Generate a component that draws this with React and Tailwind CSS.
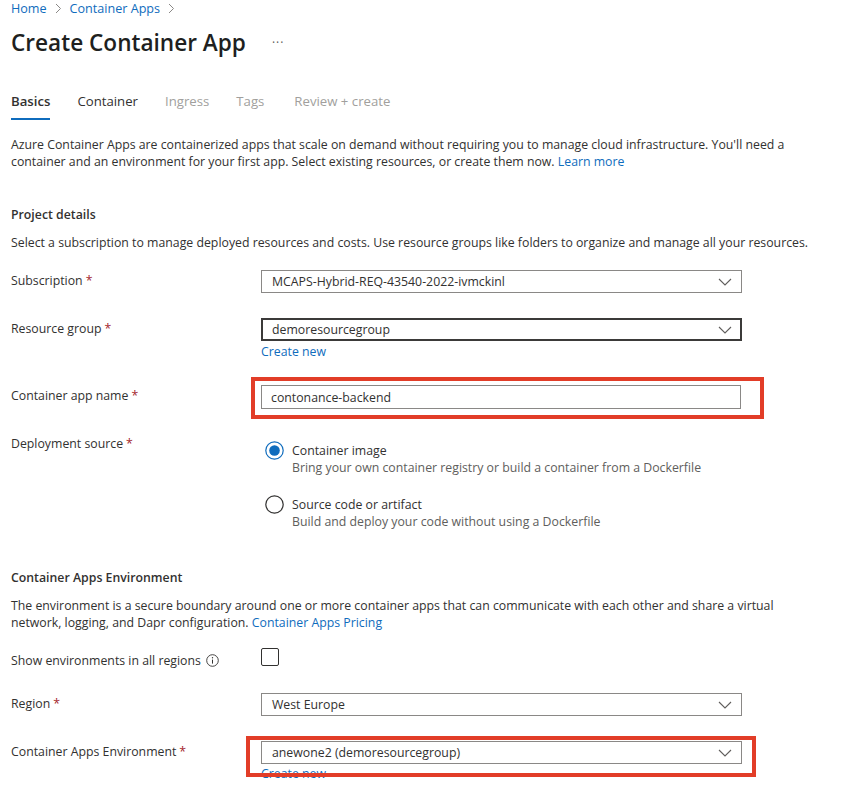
import React from "react";

const font = { fontFamily: '"Open Sans", "Noto Sans", sans-serif' };

function Chevron() {
  return (
    <svg width="14" height="8" viewBox="0 0 14 8" className="shrink-0">
      <path d="M1 1 L7 7 L13 1" fill="none" stroke="#605e5c" strokeWidth="1.1" />
    </svg>
  );
}

function Crumb() {
  return (
    <svg width="7" height="11" viewBox="0 0 7 11" className="shrink-0 mx-[8px]">
      <path d="M1 1 L5.5 5.5 L1 10" fill="none" stroke="#8a8886" strokeWidth="1" />
    </svg>
  );
}

function Req() {
  return <span className="text-[#a4262c] ml-[3px]">*</span>;
}

function Label({ children, req = true }) {
  return (
    <div className="w-[250px] shrink-0 mt-[2px] leading-[17px]">
      {children}
      {req && <Req />}
    </div>
  );
}

function Select({ value, focused }) {
  return (
    <div
      className={
        "w-[481px] h-[23px] flex items-center justify-between bg-white " +
        (focused ? "border-2 border-[#3b3a39] pl-[9px] pr-[8px]" : "border border-[#8a8886] pl-[10px] pr-[9px]")
      }
    >
      <span className="leading-[17px]">{value}</span>
      <Chevron />
    </div>
  );
}

function Radio({ checked }) {
  return (
    <svg width="19" height="19" viewBox="0 0 19 19" className="shrink-0">
      <circle cx="9.5" cy="9.5" r="8.7" fill="white" stroke={checked ? "#0f6cbd" : "#323130"} strokeWidth="1.2" />
      {checked && <circle cx="9.5" cy="9.5" r="5.3" fill="#0f6cbd" />}
    </svg>
  );
}

export default function App() {
  return (
    <div className="w-[849px] h-[802px] overflow-hidden bg-white text-[#323130] text-[12.3px]" style={font}>
      <div className="px-[11px] flex flex-col">
        {/* breadcrumb */}
        <div className="flex items-center h-[17px] leading-[17px] text-[#0f6cbd] text-[12.6px]">
          <span>Home</span>
          <Crumb />
          <span>Container Apps</span>
          <Crumb />
        </div>
        {/* title */}
        <div className="mt-[10px] flex items-center h-[32px]">
          <h1 className="text-[22.6px] leading-[32px] font-semibold text-[#201f1e]">Create Container App</h1>
          <span className="ml-[26px] text-[#605e5c] text-[12px] tracking-[1px]">···</span>
        </div>
        {/* tabs */}
        <div className="mt-[34px] flex gap-[27px] leading-[17px] text-[13.2px]">
          <div className="pb-[8px] border-b-2 border-[#0f6cbd] font-semibold text-[#323130]">Basics</div>
          <div className="pb-[8px] text-[#323130]">Container</div>
          <div className="pb-[8px] text-[#a19f9d]">Ingress</div>
          <div className="pb-[8px] text-[#a19f9d]">Tags</div>
          <div className="pb-[8px] text-[#a19f9d] ml-[3px]">Review + create</div>
        </div>
        {/* description */}
        <p className="mt-[16px] leading-[17px] whitespace-nowrap">
          Azure Container Apps are containerized apps that scale on demand without requiring you to manage cloud infrastructure. You'll need a
          <br />
          container and an environment for your first app. Select existing resources, or create them now.{" "}
          <span className="text-[#0f6cbd]">Learn more</span>
        </p>

        {/* Project details */}
        <h2 className="mt-[36px] font-semibold leading-[17px]">Project details</h2>
        <p className="mt-[11px] leading-[17px] whitespace-nowrap">
          Select a subscription to manage deployed resources and costs. Use resource groups like folders to organize and manage all your resources.
        </p>

        <div className="mt-[19px] flex items-start">
          <Label>Subscription</Label>
          <Select value="MCAPS-Hybrid-REQ-43540-2022-ivmckinl" />
        </div>

        <div className="mt-[25px] flex items-start">
          <Label>Resource group</Label>
          <div className="flex flex-col">
            <Select value="demoresourcegroup" focused />
            <span className="text-[#0f6cbd] leading-[17px] mt-[2px]">Create new</span>
          </div>
        </div>

        <div className="mt-[25px] flex items-start">
          <Label>Container app name</Label>
          <div className="relative">
            <div className="w-[480px] h-[24px] border border-[#8a8886] flex items-center pl-[9px]">
              <span className="leading-[17px]">contonance-backend</span>
            </div>
            <div className="absolute left-[-10px] top-[-8px] w-[513px] h-[42px] border-[4px] border-[#e23d28]" />
          </div>
        </div>

        <div className="mt-[24px] flex items-start">
          <Label>Deployment source</Label>
          <div className="flex flex-col pt-[8px] ml-[4px]">
            <div className="flex items-start gap-[8px]">
              <Radio checked />
              <div className="flex flex-col leading-[17px] mt-[1px]">
                <span>Container image</span>
                <span className="text-[#605e5c]">Bring your own container registry or build a container from a Dockerfile</span>
              </div>
            </div>
            <div className="flex items-start gap-[8px] mt-[19px]">
              <Radio />
              <div className="flex flex-col leading-[17px] mt-[1px]">
                <span>Source code or artifact</span>
                <span className="text-[#605e5c]">Build and deploy your code without using a Dockerfile</span>
              </div>
            </div>
          </div>
        </div>

        {/* Container Apps Environment */}
        <h2 className="mt-[39px] font-semibold leading-[17px]">Container Apps Environment</h2>
        <p className="mt-[11px] leading-[17px] whitespace-nowrap">
          The environment is a secure boundary around one or more container apps that can communicate with each other and share a virtual
          <br />
          network, logging, and Dapr configuration. <span className="text-[#0f6cbd]">Container Apps Pricing</span>
        </p>

        <div className="mt-[17px] flex items-start">
          <div className="w-[250px] shrink-0 mt-[4px] leading-[17px] flex items-center gap-[5px]">
            <span>Show environments in all regions</span>
            <svg width="13" height="13" viewBox="0 0 13 13">
              <circle cx="6.5" cy="6.5" r="5.8" fill="none" stroke="#323130" strokeWidth="0.9" />
              <line x1="6.5" y1="5.6" x2="6.5" y2="9.6" stroke="#323130" strokeWidth="1" />
              <circle cx="6.5" cy="3.8" r="0.7" fill="#323130" />
            </svg>
          </div>
          <div className="w-[18px] h-[18px] border border-[#323130] rounded-[2px]" />
        </div>

        <div className="mt-[24px] flex items-start">
          <Label>Region</Label>
          <Select value="West Europe" />
        </div>

        <div className="mt-[25px] flex items-start">
          <Label>Container Apps Environment</Label>
          <div className="relative flex flex-col">
            <Select value="anewone2 (demoresourcegroup)" />
            <span className="text-[#0f6cbd] leading-[17px] mt-[1px]">Create new</span>
            <div className="absolute left-[-15px] top-[-5px] w-[510px] h-[41px] border-[4px] border-[#e23d28]" />
          </div>
        </div>
      </div>
    </div>
  );
}
